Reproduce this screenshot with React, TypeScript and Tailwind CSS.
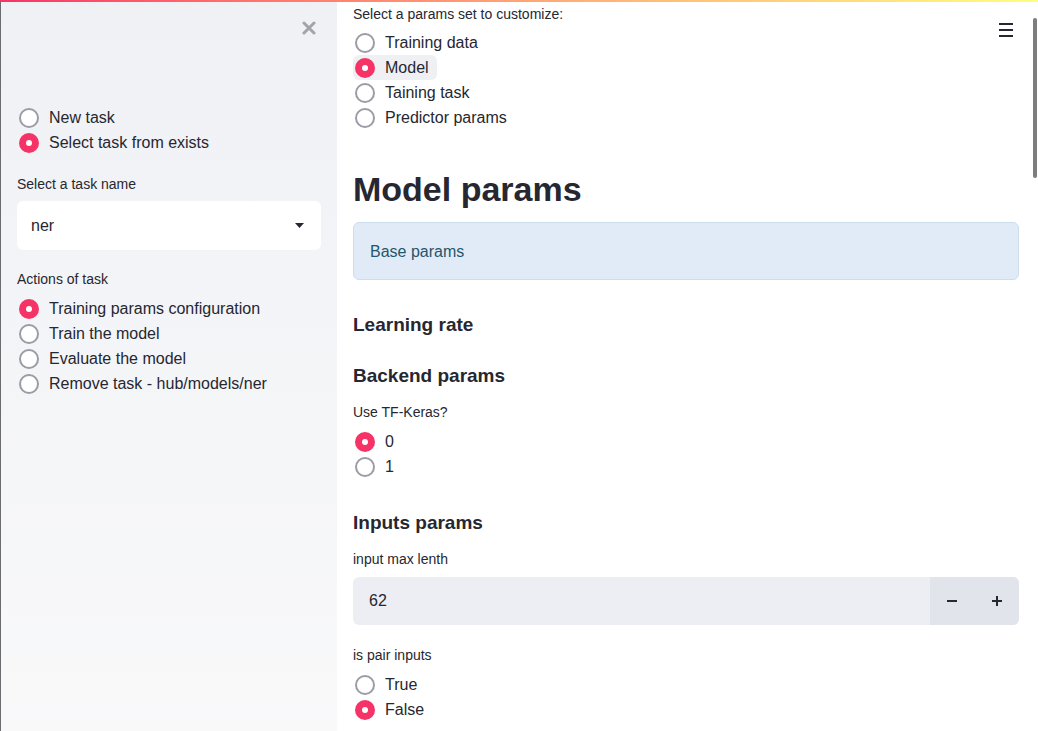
import React from "react";

const FONT = { fontFamily: '"Liberation Sans", Arial, sans-serif' };

const Radio = ({ checked }: { checked?: boolean }) =>
    checked ? (
        <span className="flex h-[20px] w-[20px] shrink-0 items-center justify-center rounded-full bg-[#f63366]">
            <span className="h-[6px] w-[6px] rounded-full bg-white" />
        </span>
    ) : (
        <span className="h-[20px] w-[20px] shrink-0 rounded-full border-2 border-[#9b9ca6] bg-white" />
    );

const RadioRow = ({ label, checked, highlight }: { label: string; checked?: boolean; highlight?: boolean }) => (
    <div className="flex h-[25px]">
        <div className={`flex items-center gap-[10px] pl-[2px] pr-[8px] rounded-md ${highlight ? "bg-[#eef0f4]" : ""}`}>
            <Radio checked={checked} />
            <span className="text-[16px] text-[#262730]">{label}</span>
        </div>
    </div>
);

const Label = ({ children, className = "" }: { children: React.ReactNode; className?: string }) => (
    <div className={`h-[20px] leading-[20px] text-[14px] text-[#262730] ${className}`}>{children}</div>
);

export default function App() {
    return (
        <div style={FONT} className="relative h-[731px] w-[1038px] overflow-hidden bg-white">
            <div className="h-[2px] w-full bg-gradient-to-r from-[#f63366] to-[#fffd80]" />
            <div className="flex h-[729px]">
                {/* sidebar */}
                <aside className="w-[337px] shrink-0 border-l border-[#6b6b70] bg-gradient-to-b from-[#eff1f5] to-[#f9f9fa] px-[16px]">
                    <div className="flex h-[103px] justify-end pr-[5px] pt-[19px]">
                        <svg width="14" height="14" viewBox="0 0 14 14">
                            <path d="M2 2 L12 12 M12 2 L2 12" stroke="#a3a4ab" strokeWidth="3" strokeLinecap="round" />
                        </svg>
                    </div>
                    <RadioRow label="New task" />
                    <RadioRow label="Select task from exists" checked />
                    <Label className="mt-[19px]">Select a task name</Label>
                    <div className="mt-[7px] flex h-[49px] items-center justify-between rounded-md bg-white pl-[14px] pr-[17px]">
                        <span className="text-[16px] text-[#262730]">ner</span>
                        <svg width="9" height="5" viewBox="0 0 9 5">
                            <path d="M0 0 H9 L4.5 5 Z" fill="#262730" />
                        </svg>
                    </div>
                    <Label className="mt-[19px]">Actions of task</Label>
                    <div className="mt-[7px]">
                        <RadioRow label="Training params configuration" checked />
                        <RadioRow label="Train the model" />
                        <RadioRow label="Evaluate the model" />
                        <RadioRow label="Remove task - hub/models/ner" />
                    </div>
                </aside>

                {/* main */}
                <main className="flex-1 pl-[16px] pr-[19px] pt-[2px]">
                    <Label>Select a params set to customize:</Label>
                    <div className="mt-[6px]">
                        <RadioRow label="Training data" />
                        <RadioRow label="Model" checked highlight />
                        <RadioRow label="Taining task" />
                        <RadioRow label="Predictor params" />
                    </div>
                    <h1 className="mt-[35px] h-[48px] text-[34px] font-bold leading-[48px] text-[#262730]">Model params</h1>
                    <div className="mt-[9px] flex h-[58px] items-center rounded-md border border-[#cddcee] bg-[#e1ebf8] px-[16px] pt-[2px]">
                        <span className="text-[16px] text-[#24566b]">Base params</span>
                    </div>
                    <h3 className="mt-[31px] h-[28px] text-[19px] font-bold leading-[28px] text-[#262730]">Learning rate</h3>
                    <h3 className="mt-[23px] h-[28px] text-[19px] font-bold leading-[28px] text-[#262730]">Backend params</h3>
                    <Label className="mt-[12px] text-[13px]">Use TF-Keras?</Label>
                    <div className="mt-[7px]">
                        <RadioRow label="0" checked />
                        <RadioRow label="1" />
                    </div>
                    <h3 className="mt-[30px] h-[28px] text-[19px] font-bold leading-[28px] text-[#262730]">Inputs params</h3>
                    <Label className="mt-[12px] text-[13px]">input max lenth</Label>
                    <div className="mt-[8px] flex h-[48px] overflow-hidden rounded-md bg-[#eceef3]">
                        <div className="flex flex-1 items-center pl-[16px] text-[16px] text-[#262730]">62</div>
                        <div className="flex w-[89px] bg-[#e1e4ea]">
                            <div className="flex flex-1 items-center justify-center">
                                <svg width="10" height="2" viewBox="0 0 10 2"><rect width="10" height="2" fill="#262730" /></svg>
                            </div>
                            <div className="flex flex-1 items-center justify-center">
                                <svg width="10" height="10" viewBox="0 0 10 10"><path d="M0 5 H10 M5 0 V10" stroke="#262730" strokeWidth="2" /></svg>
                            </div>
                        </div>
                    </div>
                    <Label className="mt-[20px] text-[13px]">is pair inputs</Label>
                    <div className="mt-[7px]">
                        <RadioRow label="True" />
                        <RadioRow label="False" checked />
                    </div>
                </main>
            </div>

            {/* hamburger menu */}
            <div className="absolute right-[25px] top-[23px] flex w-[14px] flex-col gap-[4px]">
                <span className="h-[2px] w-full bg-[#262730]" />
                <span className="h-[2px] w-full bg-[#262730]" />
                <span className="h-[2px] w-full bg-[#262730]" />
            </div>
            {/* scrollbar thumb */}
            <div className="absolute right-[1px] top-[18px] h-[160px] w-[4px] rounded-full bg-[#7d7d80]" />
        </div>
    );
}
